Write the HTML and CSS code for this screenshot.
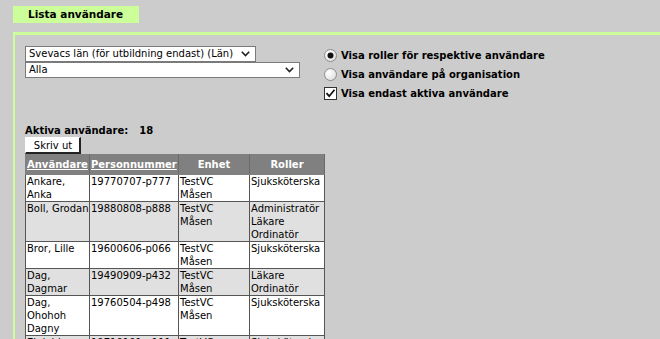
FILE: index.html
```html
<!DOCTYPE html>
<html lang="sv">
<head>
<meta charset="utf-8">
<title>Lista användare</title>
<link rel="stylesheet" href="styles.css">
</head>
<body>
<div class="tabbar"><span class="tab">Lista användare</span></div>
<div class="panel">
  <div class="filters">
    <div class="selects">
      <div class="select s1"><span>Svevacs län (för utbildning endast) (Län)</span><svg width="9" height="6" viewBox="0 0 9 6"><path d="M0.8 0.8 L4.5 4.6 L8.2 0.8" fill="none" stroke="#222" stroke-width="1.6"/></svg></div>
      <div class="select s2"><span>Alla</span><svg width="9" height="6" viewBox="0 0 9 6"><path d="M0.8 0.8 L4.5 4.6 L8.2 0.8" fill="none" stroke="#222" stroke-width="1.6"/></svg></div>
    </div>
    <div class="options">
      <label class="opt"><svg class="ctl" width="13" height="13" viewBox="0 0 13 13"><defs><radialGradient id="rg" cx="0.35" cy="0.35" r="0.8"><stop offset="0" stop-color="#fff"/><stop offset="1" stop-color="#dcdcdc"/></radialGradient></defs><circle cx="6.5" cy="6.5" r="6" fill="url(#rg)" stroke="#8a8a8a"/><circle cx="6.5" cy="6.5" r="3" fill="#111"/></svg>Visa roller för respektive användare</label>
      <label class="opt"><svg class="ctl" width="13" height="13" viewBox="0 0 13 13"><circle cx="6.5" cy="6.5" r="6" fill="url(#rg)" stroke="#8a8a8a"/></svg>Visa användare på organisation</label>
      <label class="opt"><svg class="ctl" width="13" height="13" viewBox="0 0 13 13"><rect x="0.5" y="0.5" width="12" height="12" fill="#fff" stroke="#333"/><path d="M2.5 6.2 L5.2 9.2 L10.5 2.8" fill="none" stroke="#111" stroke-width="1.8"/></svg>Visa endast aktiva användare</label>
    </div>
  </div>
  <div class="count">Aktiva användare:<span class="num">18</span></div>
  <button class="print" type="button">Skriv ut</button>
  <table class="users">
    <colgroup><col class="c1"><col class="c2"><col class="c3"><col class="c4"></colgroup>
    <thead>
      <tr><th class="left"><a href="#">Användare</a></th><th class="left"><a href="#">Personnummer</a></th><th>Enhet</th><th>Roller</th></tr>
    </thead>
    <tbody>
      <tr><td>Ankare, Anka</td><td>19770707-p777</td><td>TestVC Måsen</td><td>Sjuksköterska</td></tr>
      <tr class="alt"><td>Boll, Grodan</td><td>19880808-p888</td><td>TestVC Måsen</td><td>Administratör<br>Läkare<br>Ordinatör</td></tr>
      <tr><td>Bror, Lille</td><td>19600606-p066</td><td>TestVC Måsen</td><td>Sjuksköterska</td></tr>
      <tr class="alt"><td>Dag, Dagmar</td><td>19490909-p432</td><td>TestVC Måsen</td><td>Läkare<br>Ordinatör</td></tr>
      <tr><td>Dag, Ohohoh Dagny</td><td>19760504-p498</td><td>TestVC Måsen</td><td>Sjuksköterska</td></tr>
      <tr class="alt"><td>Ekdahl, Hans</td><td>19710101-p111</td><td>TestVC Måsen</td><td>Sjuksköterska</td></tr>
    </tbody>
  </table>
</div>
</body>
</html>
```

FILE: styles.css
```css
html, body {
  margin: 0;
  padding: 0;
  background: #cccccc;
  font-family: "DejaVu Sans", Verdana, sans-serif;
  font-size: 10px;
  color: #000;
  overflow: hidden;
}
.tabbar {
  padding: 6px 0 0 13px;
  height: 17px;
}
.tab {
  display: inline-block;
  background: #ccff99;
  height: 17px;
  line-height: 17px;
  padding: 0 16px 0 15px;
  font-weight: bold;
  font-size: 10.5px;
}
.panel {
  margin: 9px 0 0 13px;
  border-top: 3px solid #ccff99;
  border-left: 2px solid #ccff99;
  padding: 11px 0 0 10px;
  min-height: 400px;
}
.filters {
  display: flex;
  height: 66px;
}
.selects {
  width: 298px;
  display: flex;
  flex-direction: column;
}
.select {
  box-sizing: border-box;
  height: 16px;
  background: #fff;
  border: 1px solid #7a7a7a;
  display: flex;
  align-items: center;
  justify-content: space-between;
  padding: 0 5px 0 3px;
  line-height: 14px;
  white-space: nowrap;
}
.select svg { flex: none; }
.s1 { width: 231px; }
.s2 { width: 275px; }
.options {
  display: flex;
  flex-direction: column;
  gap: 6px;
  padding-top: 3px;
}
.opt {
  display: flex;
  align-items: center;
  font-weight: bold;
  height: 13px;
  line-height: 13px;
}
.ctl {
  margin: 0 4px 0 1px;
  flex: none;
}
.count {
  margin-top: 12px;
  font-weight: bold;
  height: 13px;
  line-height: 13px;
}
.count .num { margin-left: 11px; }
.print {
  display: block;
  box-sizing: border-box;
  width: 56px;
  height: 17px;
  margin: 0;
  padding: 0 0 0 1px;
  background: #fff;
  border: 1px solid #fff;
  border-right: 2px solid #222;
  border-bottom: 2px solid #222;
  font-family: "DejaVu Sans", Verdana, sans-serif;
  font-size: 10px;
  color: #000;
  line-height: 13px;
}
.users {
  border-collapse: collapse;
  table-layout: fixed;
  width: 299px;
}
.c1 { width: 64px; }
.c2 { width: 89px; }
.c3 { width: 71px; }
.c4 { width: 75px; }
.users th {
  background: #808080;
  color: #fff;
  font-weight: bold;
  height: 19px;
  padding: 0 1px;
  text-align: center;
  border: 1px solid #808080;
  border-right-color: #6a6a6a;
  white-space: nowrap;
}
.users th.left { text-align: left; }
.users th a { color: #fff; text-decoration: underline; }
.users td {
  border: 1px solid #555;
  padding: 0 0 0 1px;
  vertical-align: top;
  line-height: 13px;
  background: #fff;
}
.users tr.alt td { background: #e0e0e0; }
```
